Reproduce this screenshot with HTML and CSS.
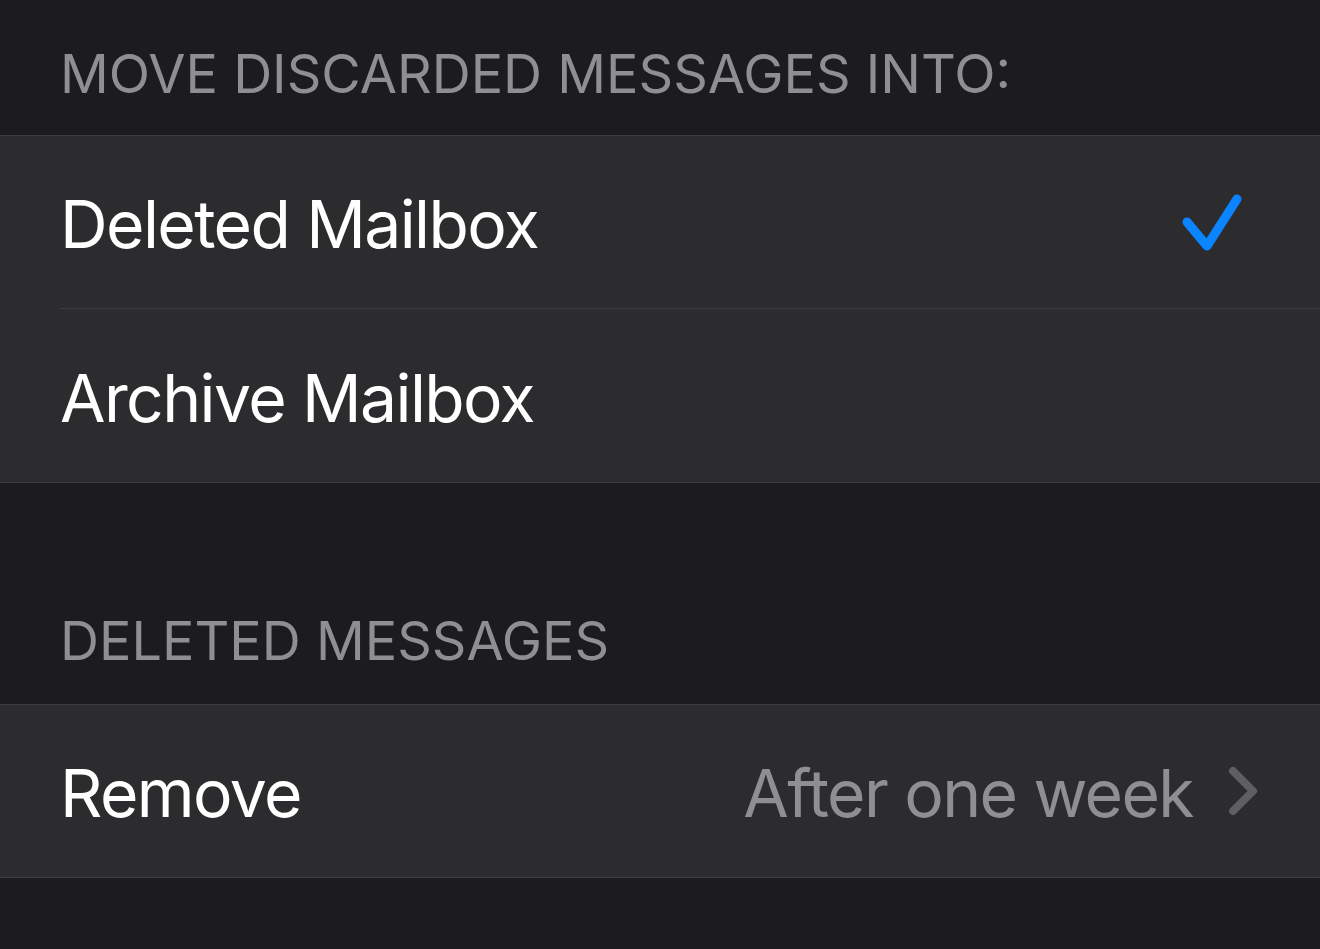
FILE: index.html
```html
<!DOCTYPE html>
<html lang="en">
<head>
<meta charset="utf-8">
<title>Mail Settings</title>
<link rel="stylesheet" href="styles.css">
</head>
<body>
<div class="screen">
  <div class="section-header first">MOVE DISCARDED MESSAGES INTO:</div>
  <div class="group">
    <div class="row">
      <div class="row-inner">
        <span class="label">Deleted Mailbox</span>
        <svg class="check" width="64" height="64" viewBox="0 0 64 64">
          <polyline points="7,30 27,54 57,7" fill="none" stroke="#0a84ff" stroke-width="9" stroke-linecap="round" stroke-linejoin="round"/>
        </svg>
      </div>
    </div>
    <div class="row">
      <div class="row-inner">
        <span class="label">Archive Mailbox</span>
      </div>
    </div>
  </div>
  <div class="section-header second">DELETED MESSAGES</div>
  <div class="group">
    <div class="row">
      <div class="row-inner">
        <span class="label">Remove</span>
        <span class="value">After one week</span>
        <svg class="chevron" width="32" height="50" viewBox="0 0 32 50">
          <polyline points="6,5 26,25 6,45" fill="none" stroke="#5e5e63" stroke-width="8" stroke-linecap="round" stroke-linejoin="round"/>
        </svg>
      </div>
    </div>
  </div>
</div>
</body>
</html>
```

FILE: styles.css
```css
html, body {
  margin: 0;
  padding: 0;
  background: #1c1c1e;
}
.screen {
  width: 1320px;
  height: 949px;
  overflow: hidden;
  font-family: Inter, "Helvetica Neue", Arial, sans-serif;
  background: #1c1c1e;
}
.section-header {
  color: #8e8e93;
  font-size: 54px;
  line-height: 1;
  padding-left: 60px;
  display: flex;
  align-items: flex-end;
  box-sizing: border-box;
}
.section-header.first {
  height: 135px;
  padding-bottom: 34px;
}
.section-header.second {
  height: 221px;
  padding-bottom: 36px;
}
.group {
  background: #2c2c2e;
  border-top: 1px solid #3d3d41;
  border-bottom: 1px solid #3d3d41;
}
.row {
  padding-left: 60px;
}
.row-inner {
  height: 172px;
  display: flex;
  align-items: center;
  padding-right: 65px;
}
.row + .row .row-inner {
  border-top: 1px solid #3d3d41;
  height: 173px;
}
.label {
  color: #ffffff;
  font-size: 66px;
  letter-spacing: -1.6px;
  line-height: 1;
  flex: 1;
  padding-top: 4px;
}
.value {
  color: #8e8e93;
  font-size: 66px;
  letter-spacing: -1.6px;
  line-height: 1;
  padding-top: 4px;
  margin-right: 34px;
}
.check {
  margin-right: 11px;
  margin-top: 4px;
}
.chevron {
  margin-right: -4px;
}
```
